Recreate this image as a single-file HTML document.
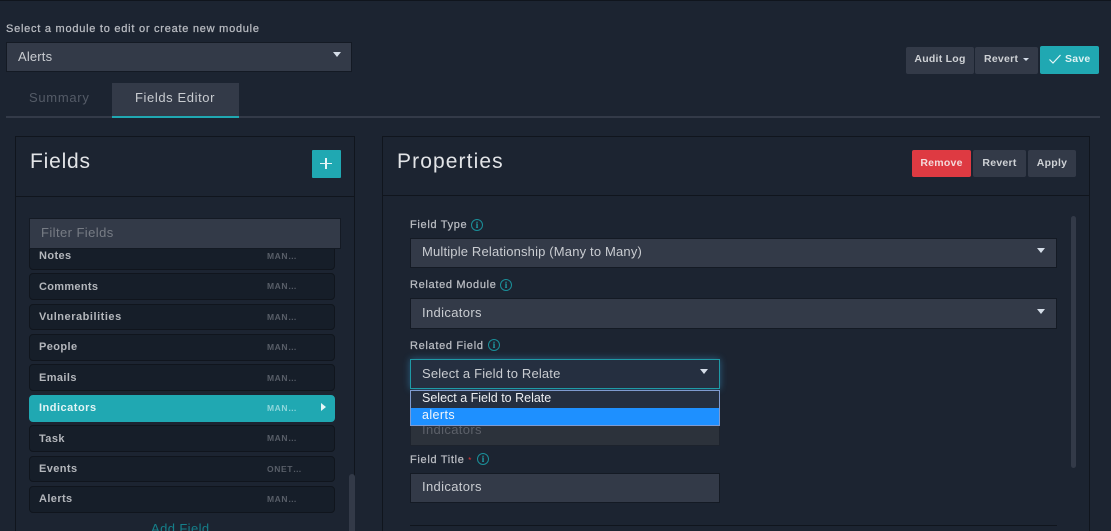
<!DOCTYPE html>
<html><head><meta charset="utf-8">
<style>
html,body{margin:0;padding:0;background:#1c2431;width:1111px;height:531px;overflow:hidden;}
#w{position:absolute;left:0;top:0;width:1111px;height:531px;overflow:hidden;font-family:"Liberation Sans",sans-serif;color:#d3d6da;}
.a{position:absolute;box-sizing:border-box;white-space:nowrap;}
.t{position:absolute;white-space:nowrap;line-height:14px;}
.sel{background:#333a48;border:1px solid #141a24;}
.btn{background:#333a48;border-radius:2px;color:#cfd2d6;font-size:10.5px;font-weight:bold;letter-spacing:.25px;text-align:center;}
.lab{font-size:11px;color:#b9bcc2;letter-spacing:.68px;-webkit-text-stroke:.25px #b9bcc2;}
.val{font-size:13px;color:#c9ccd1;letter-spacing:.17px;}
.it{position:absolute;left:29px;width:306px;background:#161e29;border:1px solid #10151d;border-radius:4px;box-sizing:border-box;}
.n{position:absolute;left:39px;font-size:11px;font-weight:bold;color:#b4b7bc;letter-spacing:.4px;white-space:nowrap;line-height:14px;}
.m{position:absolute;left:267px;font-size:8.5px;font-weight:bold;color:#585e68;letter-spacing:.6px;white-space:nowrap;line-height:12px;}
.car{position:absolute;width:0;height:0;border-left:4.5px solid transparent;border-right:4.5px solid transparent;border-top:5px solid #d5dde8;}
.i{position:absolute;width:12px;height:12px;box-sizing:border-box;border:1px solid #1a8f99;border-radius:50%;color:#1fa3ad;font:bold 9px/10px "Liberation Serif",serif;text-align:center;}
</style></head><body>
<div id="w">
<div class="a" style="left:0;top:0;width:1111px;height:1px;background:#10151d"></div>

<div class="t" style="left:6px;top:22px;font-size:11px;color:#b9bcc2;letter-spacing:.75px;-webkit-text-stroke:.25px #b9bcc2">Select a module to edit or create new module</div>
<div class="a sel" style="left:6px;top:42px;width:346px;height:30px"></div>
<div class="t val" style="left:18px;top:50px">Alerts</div>
<div class="car" style="left:333px;top:52px"></div>

<div class="a btn" style="left:906px;top:47px;width:68px;height:27px;line-height:24px">Audit Log</div>
<div class="a btn" style="left:975px;top:47px;width:63px;height:27px;line-height:24px;text-align:left;padding-left:9px">Revert</div>
<div class="car" style="left:1023px;top:58px;border-left-width:3.5px;border-right-width:3.5px;border-top-width:3.5px"></div>
<div class="a btn" style="left:1040px;top:46px;width:59px;height:28px;line-height:26px;background:#20a8b2;color:#dff3f4;text-align:left;padding-left:25px">Save</div>
<svg class="a" style="left:1048px;top:53px" width="14" height="12" viewBox="0 0 14 12"><path d="M1.5 6.5L5 10L12.5 2" fill="none" stroke="#e6f6f7" stroke-width="1.2"/></svg>

<div class="t" style="left:29px;top:91px;font-size:13px;color:#545b67;letter-spacing:.7px">Summary</div>
<div class="a" style="left:6px;top:116px;width:1094px;height:2px;background:#333a48"></div>
<div class="a" style="left:112px;top:83px;width:127px;height:33px;background:#333a48"></div>
<div class="a" style="left:112px;top:116px;width:127px;height:2px;background:#20a8b2"></div>
<div class="t" style="left:135px;top:91px;font-size:13px;color:#c9ccd1;letter-spacing:.6px">Fields Editor</div>

<!-- Fields panel -->
<div class="a" style="left:15px;top:136px;width:340px;height:400px;border:1px solid #10151d"></div>
<div class="a" style="left:15px;top:196px;width:340px;height:1px;background:#10151d"></div>
<div class="t" style="left:30px;top:150px;font-size:21px;line-height:24px;color:#e2e4e7;letter-spacing:.8px">Fields</div>
<div class="a" style="left:312px;top:150px;width:29px;height:28px;background:#20a8b2;border-radius:1px"></div>
<div class="a" style="left:320px;top:162.5px;width:12px;height:1.5px;background:#e6f6f7"></div>
<div class="a" style="left:325.3px;top:158px;width:1.5px;height:11px;background:#e6f6f7"></div>

<div class="it" style="top:240px;height:30px"></div>
<div class="n" style="top:249px">Notes</div><div class="m" style="top:250px">MAN…</div>
<div class="a sel" style="left:29px;top:218px;width:312px;height:31px"></div>
<div class="t" style="left:41px;top:226px;font-size:13px;color:#777c85;letter-spacing:.42px">Filter Fields</div>

<div class="it" style="top:273px;height:27px"></div>
<div class="n" style="top:280px;letter-spacing:.3px">Comments</div><div class="m" style="top:280px">MAN…</div>
<div class="it" style="top:304px;height:26px"></div>
<div class="n" style="top:310px;letter-spacing:.53px">Vulnerabilities</div><div class="m" style="top:311px">MAN…</div>
<div class="it" style="top:334px;height:27px"></div>
<div class="n" style="top:340px">People</div><div class="m" style="top:341px">MAN…</div>
<div class="it" style="top:364px;height:27px"></div>
<div class="n" style="top:371px">Emails</div><div class="m" style="top:372px">MAN…</div>
<div class="it" style="top:395px;height:27px;background:#20a8b2;border-color:#20a8b2"></div>
<div class="n" style="top:401px;color:#e3f4f5;letter-spacing:.5px">Indicators</div><div class="m" style="top:402px;color:#8fd6db">MAN…</div>
<div class="a" style="left:321px;top:403px;width:0;height:0;border-top:4px solid transparent;border-bottom:4px solid transparent;border-left:5px solid #e6f6f7"></div>
<div class="it" style="top:425px;height:27px"></div>
<div class="n" style="top:432px">Task</div><div class="m" style="top:432px">MAN…</div>
<div class="it" style="top:456px;height:26px"></div>
<div class="n" style="top:462px">Events</div><div class="m" style="top:463px">ONET…</div>
<div class="it" style="top:486px;height:27px"></div>
<div class="n" style="top:492px">Alerts</div><div class="m" style="top:493px">MAN…</div>
<div class="t" style="left:151px;top:522px;font-size:13px;color:#157f8a;letter-spacing:.4px">Add Field</div>
<div class="a" style="left:349px;top:474px;width:6px;height:60px;background:#333a48;border-radius:3px"></div>

<!-- Properties panel -->
<div class="a" style="left:382px;top:136px;width:708px;height:400px;border:1px solid #10151d"></div>
<div class="a" style="left:382px;top:195px;width:708px;height:1px;background:#10151d"></div>
<div class="t" style="left:397px;top:150px;font-size:21px;line-height:24px;color:#e2e4e7;letter-spacing:1.1px">Properties</div>
<div class="a btn" style="left:912px;top:150px;width:59px;height:27px;line-height:26px;background:#de3a42;color:#f4dadb">Remove</div>
<div class="a btn" style="left:973px;top:150px;width:53px;height:27px;line-height:26px">Revert</div>
<div class="a btn" style="left:1028px;top:150px;width:48px;height:27px;line-height:26px">Apply</div>

<div class="t lab" style="left:410px;top:218px">Field Type</div>
<div class="i" style="left:471px;top:219px">i</div>
<div class="a sel" style="left:410px;top:238px;width:647px;height:30px"></div>
<div class="t val" style="left:422px;top:245px">Multiple Relationship (Many to Many)</div>
<div class="car" style="left:1037px;top:248px"></div>

<div class="t lab" style="left:410px;top:278px">Related Module</div>
<div class="i" style="left:500px;top:279px">i</div>
<div class="a sel" style="left:410px;top:298px;width:647px;height:31px"></div>
<div class="t val" style="left:422px;top:306px;letter-spacing:.35px">Indicators</div>
<div class="car" style="left:1037px;top:309px"></div>

<div class="t lab" style="left:410px;top:339px">Related Field</div>
<div class="i" style="left:488px;top:339px">i</div>
<div class="a" style="left:410px;top:359px;width:310px;height:30px;background:#252f40;border:1px solid #1f9aa6;box-shadow:0 0 7px rgba(60,170,230,.45)"></div>
<div class="t val" style="left:422px;top:367px">Select a Field to Relate</div>
<div class="car" style="left:700px;top:369px"></div>

<div class="a" style="left:410px;top:426px;width:310px;height:20px;background:#2c323b;border:1px solid #1d232d;border-top:0"></div>
<div class="t val" style="left:422px;top:423px;color:#5c6069;letter-spacing:.35px">Indicators</div>
<div class="a" style="left:410px;top:390px;width:310px;height:36px;background:#252f40;border:1px solid #7f9bd0"></div>
<div class="a" style="left:411px;top:408px;width:308px;height:17px;background:#1e90ff"></div>
<div class="t" style="left:422px;top:391px;font-size:12.5px;color:#eceef1">Select a Field to Relate</div>
<div class="t" style="left:422px;top:408px;font-size:12.5px;color:#f2f6fb;letter-spacing:.4px">alerts</div>

<div class="t lab" style="left:410px;top:453px">Field Title <span style="color:#d33;font-size:8px;-webkit-text-stroke:0">*</span></div>
<div class="i" style="left:477px;top:453px">i</div>
<div class="a sel" style="left:410px;top:473px;width:310px;height:30px"></div>
<div class="t val" style="left:422px;top:480px;letter-spacing:.35px">Indicators</div>

<div class="a" style="left:410px;top:525px;width:647px;height:1px;background:#10151d"></div>
<div class="a" style="left:1071px;top:216px;width:5px;height:252px;background:#333a48;border-radius:3px"></div>
</div>
</body></html>
